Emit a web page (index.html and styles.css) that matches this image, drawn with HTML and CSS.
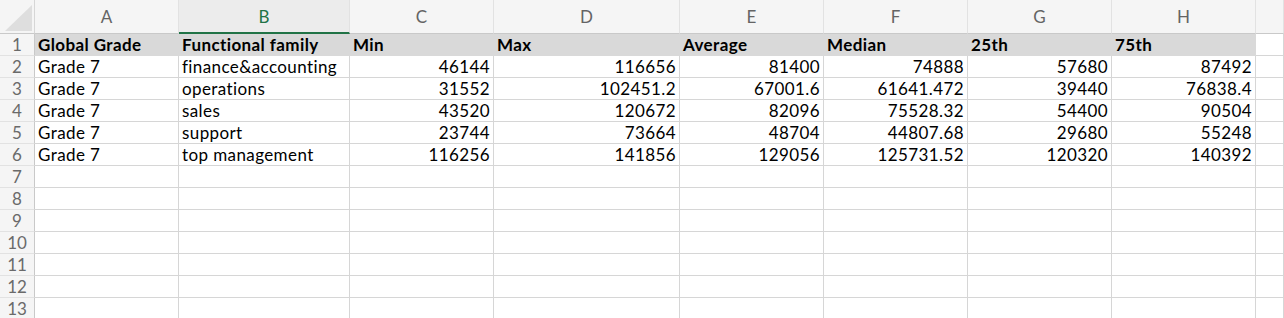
FILE: index.html
```html
<!DOCTYPE html>
<html lang="en">
<head>
    <meta charset="UTF-8">
    <title>Sheet1</title>
    <link rel="stylesheet" href="styles.css">
</head>
<body>
    <div class="sheet">
        <div class="corner"></div>
        <div class="col-head">A</div>
        <div class="col-head active">B</div>
        <div class="col-head">C</div>
        <div class="col-head">D</div>
        <div class="col-head">E</div>
        <div class="col-head">F</div>
        <div class="col-head">G</div>
        <div class="col-head">H</div>
        <div class="col-head"></div>

        <div class="row-head">1</div>
        <div class="cell title">Global Grade</div>
        <div class="cell title">Functional family</div>
        <div class="cell title">Min</div>
        <div class="cell title">Max</div>
        <div class="cell title">Average</div>
        <div class="cell title">Median</div>
        <div class="cell title">25th</div>
        <div class="cell title">75th</div>
        <div class="cell"></div>

        <div class="row-head">2</div>
        <div class="cell">Grade 7</div>
        <div class="cell">finance&amp;accounting</div>
        <div class="cell num">46144</div>
        <div class="cell num">116656</div>
        <div class="cell num">81400</div>
        <div class="cell num">74888</div>
        <div class="cell num">57680</div>
        <div class="cell num">87492</div>
        <div class="cell"></div>

        <div class="row-head">3</div>
        <div class="cell">Grade 7</div>
        <div class="cell">operations</div>
        <div class="cell num">31552</div>
        <div class="cell num">102451.2</div>
        <div class="cell num">67001.6</div>
        <div class="cell num">61641.472</div>
        <div class="cell num">39440</div>
        <div class="cell num">76838.4</div>
        <div class="cell"></div>

        <div class="row-head">4</div>
        <div class="cell">Grade 7</div>
        <div class="cell">sales</div>
        <div class="cell num">43520</div>
        <div class="cell num">120672</div>
        <div class="cell num">82096</div>
        <div class="cell num">75528.32</div>
        <div class="cell num">54400</div>
        <div class="cell num">90504</div>
        <div class="cell"></div>

        <div class="row-head">5</div>
        <div class="cell">Grade 7</div>
        <div class="cell">support</div>
        <div class="cell num">23744</div>
        <div class="cell num">73664</div>
        <div class="cell num">48704</div>
        <div class="cell num">44807.68</div>
        <div class="cell num">29680</div>
        <div class="cell num">55248</div>
        <div class="cell"></div>

        <div class="row-head">6</div>
        <div class="cell">Grade 7</div>
        <div class="cell">top management</div>
        <div class="cell num">116256</div>
        <div class="cell num">141856</div>
        <div class="cell num">129056</div>
        <div class="cell num">125731.52</div>
        <div class="cell num">120320</div>
        <div class="cell num">140392</div>
        <div class="cell"></div>

        <div class="row-head">7</div>
        <div class="cell"></div><div class="cell"></div><div class="cell"></div><div class="cell"></div>
        <div class="cell"></div><div class="cell"></div><div class="cell"></div><div class="cell"></div><div class="cell"></div>

        <div class="row-head">8</div>
        <div class="cell"></div><div class="cell"></div><div class="cell"></div><div class="cell"></div>
        <div class="cell"></div><div class="cell"></div><div class="cell"></div><div class="cell"></div><div class="cell"></div>

        <div class="row-head">9</div>
        <div class="cell"></div><div class="cell"></div><div class="cell"></div><div class="cell"></div>
        <div class="cell"></div><div class="cell"></div><div class="cell"></div><div class="cell"></div><div class="cell"></div>

        <div class="row-head">10</div>
        <div class="cell"></div><div class="cell"></div><div class="cell"></div><div class="cell"></div>
        <div class="cell"></div><div class="cell"></div><div class="cell"></div><div class="cell"></div><div class="cell"></div>

        <div class="row-head">11</div>
        <div class="cell"></div><div class="cell"></div><div class="cell"></div><div class="cell"></div>
        <div class="cell"></div><div class="cell"></div><div class="cell"></div><div class="cell"></div><div class="cell"></div>

        <div class="row-head">12</div>
        <div class="cell"></div><div class="cell"></div><div class="cell"></div><div class="cell"></div>
        <div class="cell"></div><div class="cell"></div><div class="cell"></div><div class="cell"></div><div class="cell"></div>

        <div class="row-head">13</div>
        <div class="cell"></div><div class="cell"></div><div class="cell"></div><div class="cell"></div>
        <div class="cell"></div><div class="cell"></div><div class="cell"></div><div class="cell"></div><div class="cell"></div>
    </div>
</body>
</html>
```

FILE: styles.css
```css
body {
    margin: 0;
    background-color: #fff;
    font-family: Lato, 'Open Sans', sans-serif;
    font-variant-ligatures: none;
    overflow: hidden;
}
.sheet {
    display: grid;
    grid-template-columns: 35px 144px 171px 144px 186px 144px 144px 144px 144px 1fr;
    grid-template-rows: 34px;
    grid-auto-rows: 22px;
    font-size: 17px;
    color: #000;
}
.corner {
    position: relative;
    background-color: #f5f5f5;
    border-right: 1px solid #d6d6d6;
    border-bottom: 1px solid #c9c9c9;
}
.corner::after {
    content: "";
    position: absolute;
    left: 5px;
    top: 5px;
    width: 27px;
    height: 26px;
    background-color: #dedede;
    clip-path: polygon(100% 0, 100% 100%, 0 100%);
}
.col-head {
    background-color: #f5f5f5;
    border-right: 1px solid #e2e2e2;
    border-bottom: 1px solid #c9c9c9;
    color: #646464;
    text-align: center;
    line-height: 34px;
    font-size: 17px;
}
.col-head.active {
    color: #217346;
    background-color: #ececec;
    border-bottom: 2px solid #217346;
}
.row-head {
    background-color: #f5f5f5;
    border-right: 1px solid #c9c9c9;
    border-bottom: 1px solid #e2e2e2;
    color: #6a6a6a;
    text-align: center;
    line-height: 22px;
    font-size: 17px;
}
.cell {
    border-right: 1px solid #d6d6d6;
    border-bottom: 1px solid #d6d6d6;
    padding: 0 3px;
    line-height: 21px;
    letter-spacing: 0.4px;
    white-space: nowrap;
    overflow: hidden;
}
.title {
    background-color: #d9d9d9;
    font-weight: bold;
    border-right-color: #d9d9d9;
    border-bottom-color: #d9d9d9;
}
.num {
    text-align: right;
}
```
